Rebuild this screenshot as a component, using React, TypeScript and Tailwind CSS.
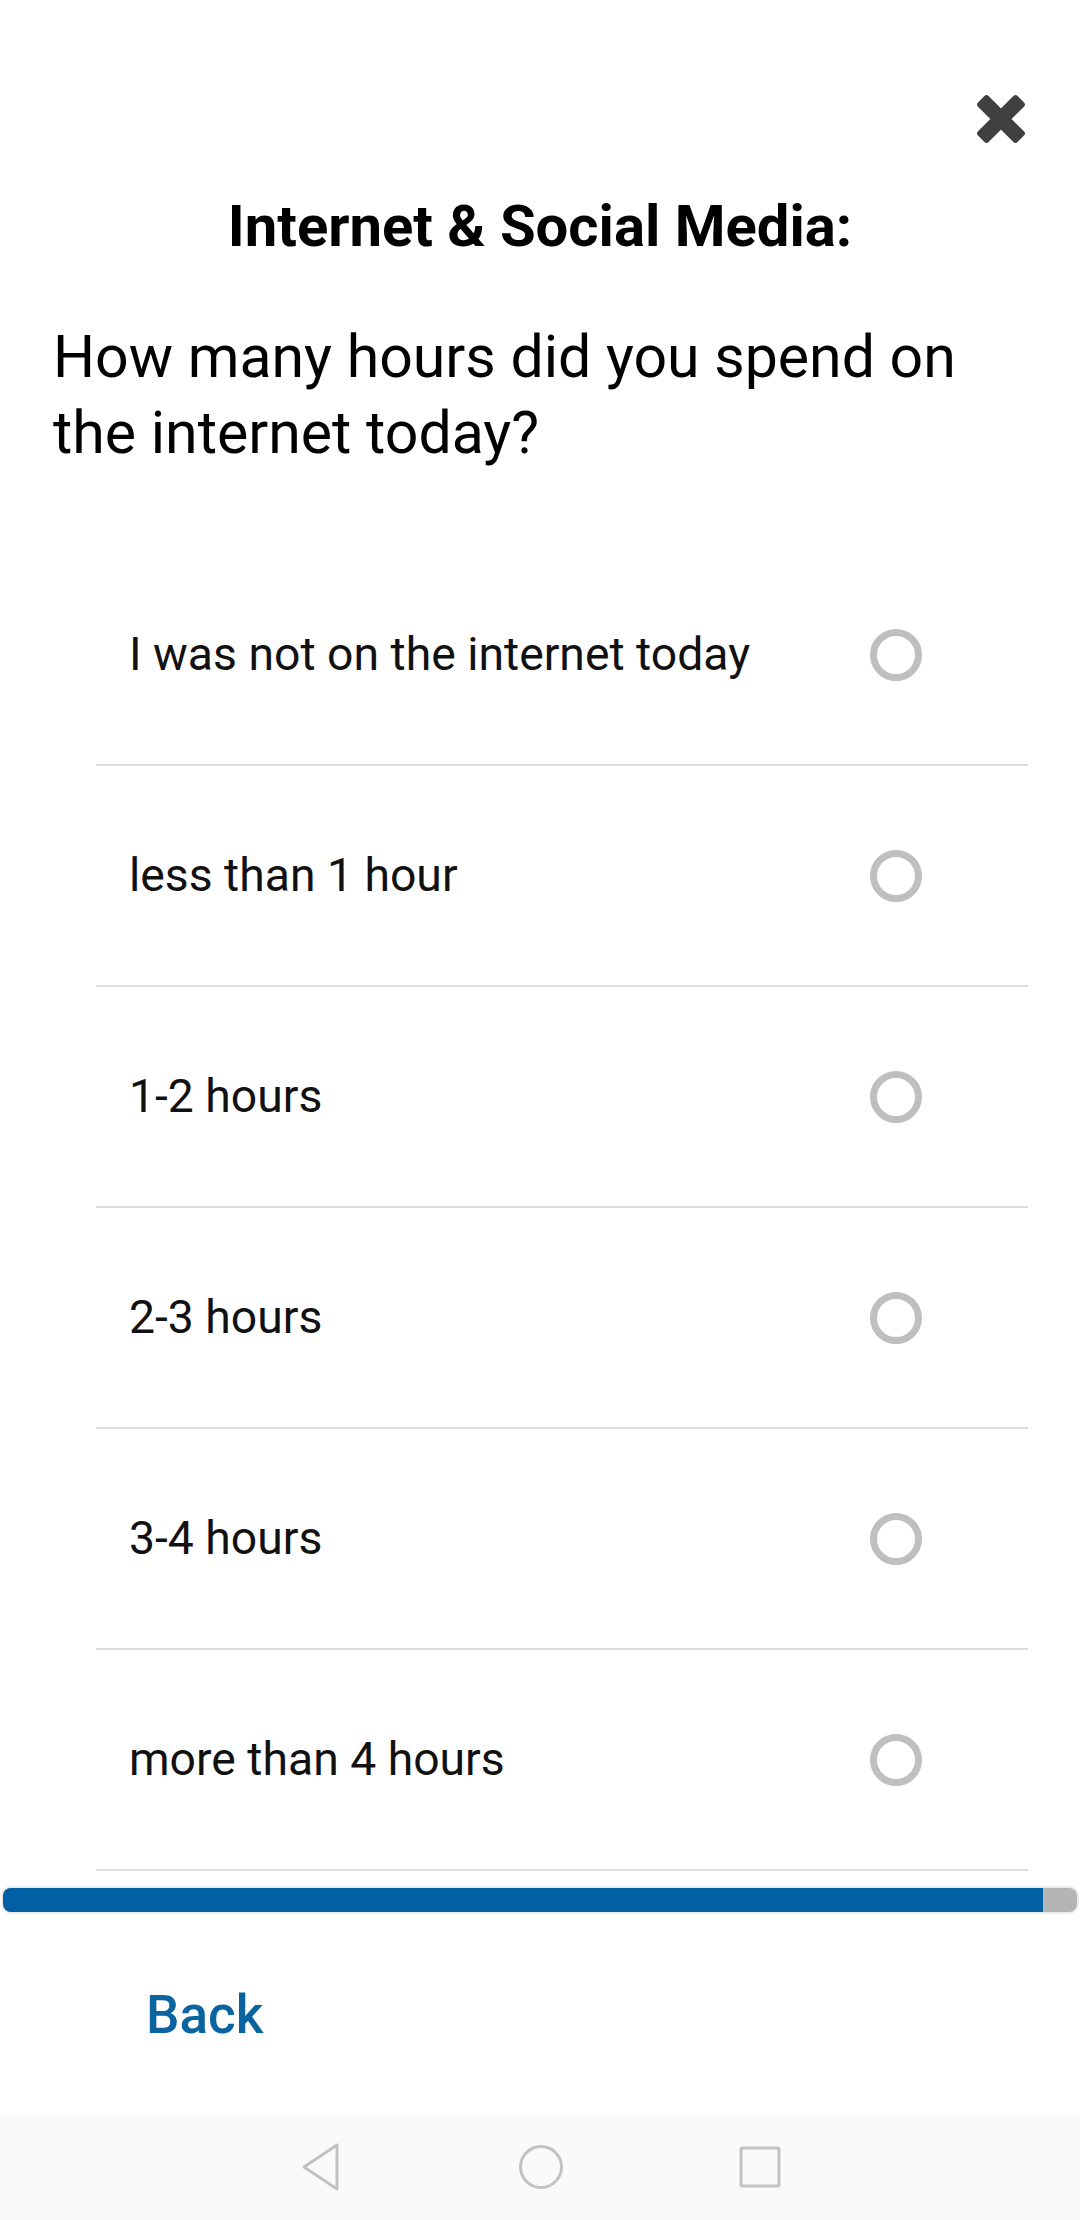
import React from 'react';

const options = [
  'I was not on the internet today',
  'less than 1 hour',
  '1-2 hours',
  '2-3 hours',
  '3-4 hours',
  'more than 4 hours',
];

const CloseIcon = () => (
  <svg width="50" height="50" viewBox="0 0 50 50">
    <g fill="#404040">
      <rect x="-3" y="17.5" width="56" height="15" rx="3" transform="rotate(45 25 25)" />
      <rect x="-3" y="17.5" width="56" height="15" rx="3" transform="rotate(-45 25 25)" />
    </g>
  </svg>
);

const Radio = () => (
  <div className="w-[52px] h-[52px] rounded-full border-[7px] border-[#bfbfbf] shrink-0" />
);

const NavBar = () => (
  <div className="mt-auto h-[107px] bg-[#fafafa] flex items-center justify-center gap-[175px]">
    <svg width="44" height="50" viewBox="0 0 44 50">
      <path d="M38 3 L38 47 L5 25 Z" fill="none" stroke="#c2c2c2" strokeWidth="3" strokeLinejoin="round" />
    </svg>
    <svg width="46" height="46" viewBox="0 0 46 46">
      <circle cx="23" cy="23" r="20.5" fill="none" stroke="#c2c2c2" strokeWidth="3" />
    </svg>
    <svg width="42" height="42" viewBox="0 0 42 42">
      <rect x="2" y="2" width="38" height="38" rx="1.5" fill="none" stroke="#c2c2c2" strokeWidth="3" />
    </svg>
  </div>
);

const App: React.FC = () => {
  return (
    <div className="h-[2220px] w-[1080px] flex flex-col bg-white text-black font-['Roboto',sans-serif]">
      <div className="pt-[94px] pr-[54px] flex justify-end">
        <button className="w-[50px] h-[50px]">
          <CloseIcon />
        </button>
      </div>

      <h1 className="mt-[48px] text-center text-[58px] leading-[68px] font-bold">
        Internet &amp; Social Media:
      </h1>

      <p className="mt-[59px] pl-[53px] pr-[40px] text-[59px] leading-[76px]">
        How many hours did you spend on the internet today?
      </p>

      <div className="mt-[74px] ml-[96px] mr-[52px] flex flex-col">
        {options.map((o) => (
          <div
            key={o}
            className="h-[221px] border-b-2 border-[#dcdcdc] flex items-center justify-between pl-[33px] pr-[106px]"
          >
            <span className="text-[46.3px] text-[#111]">{o}</span>
            <Radio />
          </div>
        ))}
      </div>

      <div className="mt-[15px] mx-[1px] h-[28px] rounded-[10px] bg-[#ececec] p-[2px]">
        <div className="h-full rounded-[8px] bg-[#b5b5b5] overflow-hidden flex">
          <div className="h-full w-[96.8%] bg-[#015fa3]" />
        </div>
      </div>

      <div className="mt-[70px] pl-[146px]">
        <button className="text-[53px] leading-[62px] font-medium text-[#0a64a0]">Back</button>
      </div>

      <NavBar />
    </div>
  );
};

export default App;
